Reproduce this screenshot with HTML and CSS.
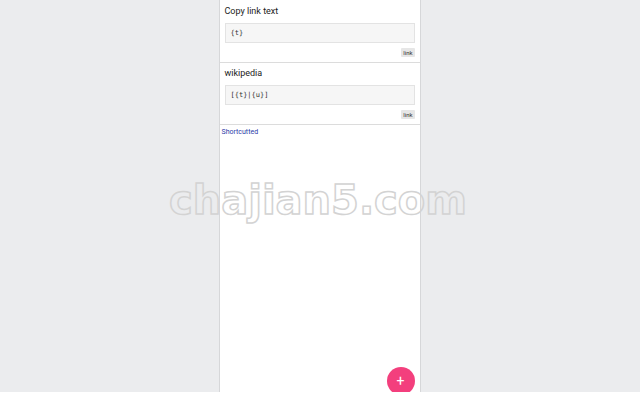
FILE: index.html
```html
<!DOCTYPE html>
<html>
<head>
<meta charset="utf-8">
<link rel="stylesheet" href="styles.css">
</head>
<body>
<div class="screen">
  <div class="panel">
    <div class="card">
      <div class="title">Copy link text</div>
      <div class="field">{t}</div>
      <div class="actions"><span class="btn">link</span></div>
    </div>
    <div class="card">
      <div class="title">wikipedia</div>
      <div class="field">[{t}|{u}]</div>
      <div class="actions"><span class="btn">link</span></div>
    </div>
    <div class="footer">Shortcutted</div>
    <div class="fab">+</div>
  </div>
  <div class="watermark">chajian5.com</div>
</div>
</body>
</html>
```
FILE: styles.css
```css
html, body {
  margin: 0;
  padding: 0;
  background: #ffffff;
}
.screen {
  position: relative;
  height: 392px;
  width: 640px;
  background: #ebecee;
  display: flex;
  justify-content: center;
  overflow: hidden;
  font-family: Roboto, "Liberation Sans", sans-serif;
}
.panel {
  position: relative;
  margin-left: -1px;
  width: 200px;
  padding-top: 1px;
  background: #ffffff;
  border-left: 1px solid #d6d7d9;
  border-right: 1px solid #d6d7d9;
}
.card {
  padding: 5px 5px 5px 5px;
  border-bottom: 1px solid #dcdcdc;
}
.title {
  font-size: 9px;
  color: #222222;
  line-height: 11px;
  height: 11px;
}
.field {
  margin-top: 6px;
  height: 18px;
  border: 1px solid #e3e3e3;
  background: #f6f6f6;
  font-family: "DejaVu Sans Mono", "Liberation Mono", monospace;
  font-size: 7px;
  line-height: 18px;
  padding-left: 5px;
  color: #333;
}
.actions {
  display: flex;
  justify-content: flex-end;
  margin-top: 5px;
}
.btn {
  font-size: 6px;
  line-height: 9px;
  padding: 0 2px;
  background: #e6e6e6;
  color: #333;
  border-radius: 1px;
}
.footer {
  font-size: 7px;
  color: #2a3aa8;
  padding: 3px 2px;
}
.fab {
  position: absolute;
  left: 167px;
  top: 367px;
  width: 28px;
  height: 28px;
  border-radius: 50%;
  background: #f33f7d;
  color: #fff;
  font-size: 14px;
  line-height: 28px;
  text-align: center;
}
.watermark {
  position: absolute;
  left: 169px;
  top: 180px;
  font-family: "DejaVu Sans", sans-serif;
  font-weight: bold;
  font-size: 40px;
  line-height: 40px;
  letter-spacing: 0;
  color: transparent;
  -webkit-text-stroke: 1.5px #d3d3d3;
}
```
